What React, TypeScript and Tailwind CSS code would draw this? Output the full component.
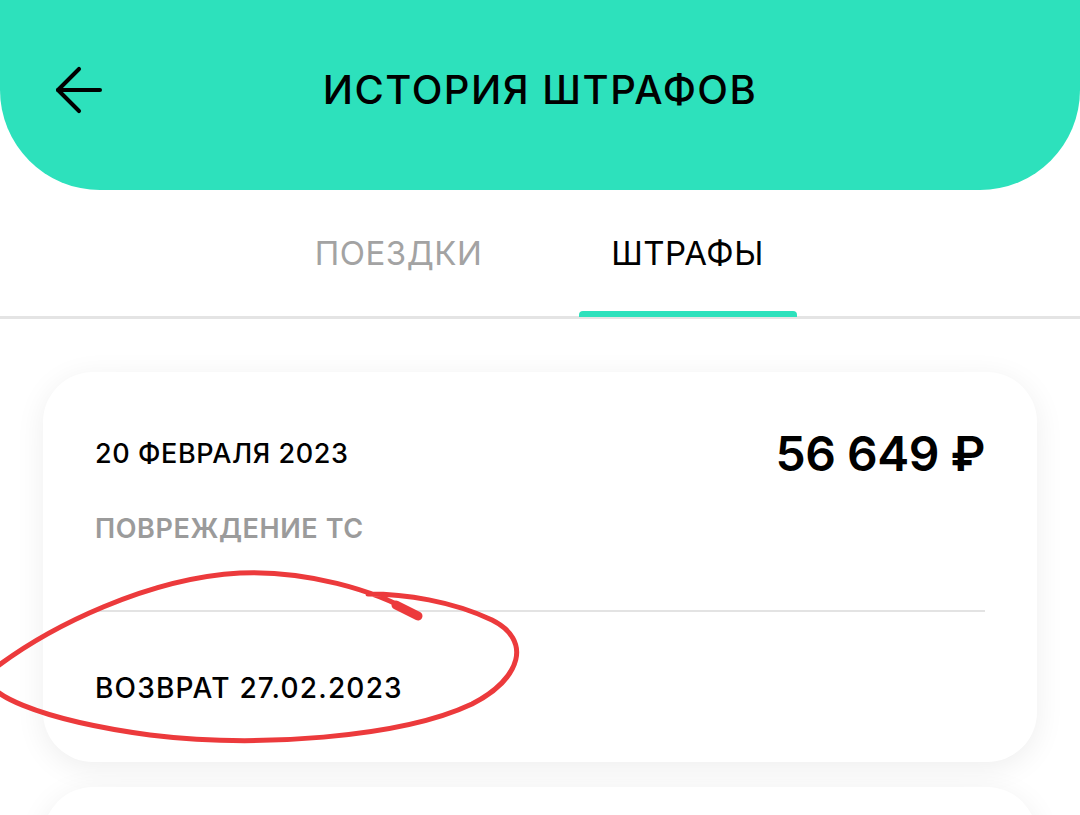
import React from 'react';
import { ArrowLeft } from 'lucide-react';

export default function App() {
  return (
    <div className="relative w-[1080px] h-[815px] overflow-hidden bg-white text-black font-['Inter','Liberation_Sans',sans-serif]">
      {/* Header */}
      <div className="h-[190px] bg-[#2de1bc] rounded-b-[100px] pt-[62px]">
        <div className="relative flex items-center justify-center h-[56px]">
          <button className="absolute left-[43px] top-1/2 -translate-y-1/2">
            <ArrowLeft size={72} strokeWidth={1.35} />
          </button>
          <h1 className="text-[40px] font-medium tracking-[1.5px] leading-none">ИСТОРИЯ ШТРАФОВ</h1>
        </div>
      </div>

      {/* Tabs */}
      <div className="flex justify-center gap-[71px] pl-[6px] border-b-[3px] border-[#e4e4e4]">
        <div className="w-[218px] h-[126px] flex flex-col">
          <div className="flex-1 flex items-center justify-center pt-[8px] text-[33px] text-[#a3a3a3] tracking-[0.5px]">ПОЕЗДКИ</div>
          <div className="h-[6px]" />
        </div>
        <div className="w-[218px] h-[126px] flex flex-col">
          <div className="flex-1 flex items-center justify-center pt-[8px] text-[33px] tracking-[0.5px]">ШТРАФЫ</div>
          <div className="h-[6px] bg-[#2de1bc] rounded-t-[4px] translate-y-[1px]" />
        </div>
      </div>

      {/* Cards */}
      <div className="px-[43px] pt-[53px] flex flex-col gap-[25px]">
        <div className="bg-white rounded-[50px] shadow-[0_6px_30px_rgba(0,0,0,0.07)] px-[52px] pt-[50px] pb-[58px]">
          <div className="flex items-center justify-between h-[64px]">
            <span className="text-[27px] font-medium tracking-[0.6px]">20 ФЕВРАЛЯ 2023</span>
            <span className="text-[48px] font-semibold tracking-[-0.5px]">56 649 ₽</span>
          </div>
          <div className="mt-[27px] text-[27px] leading-[32px] font-semibold tracking-[0.6px] text-[#9b9b9b]">ПОВРЕЖДЕНИЕ ТС</div>
          <div className="mt-[65px] h-[2px] bg-[#e3e3e3]" />
          <div className="mt-[60px] text-[28px] leading-[32px] font-medium tracking-[1.2px]">ВОЗВРАТ 27.02.2023</div>
        </div>
        <div className="bg-white rounded-[50px] shadow-[0_6px_30px_rgba(0,0,0,0.07)] h-[300px]" />
      </div>

      {/* Hand-drawn red mark */}
      <svg className="absolute left-0 top-0 pointer-events-none" width="1080" height="815" viewBox="0 0 1080 815">
        <path
          d="M415 614 C 375 590, 305 570, 240 573 C 150 578, 50 625, -10 672 C -25 692, 40 720, 150 735 C 255 748, 400 738, 472 704 C 522 678, 532 640, 492 620 C 452 601, 405 594, 368 594"
          fill="none"
          stroke="#ec3a3c"
          strokeWidth={5}
          strokeLinecap="round"
          strokeLinejoin="round"
        />
        <path d="M396 605 L418 616" stroke="#ec3a3c" strokeWidth={9} strokeLinecap="round" />
      </svg>
    </div>
  );
}
